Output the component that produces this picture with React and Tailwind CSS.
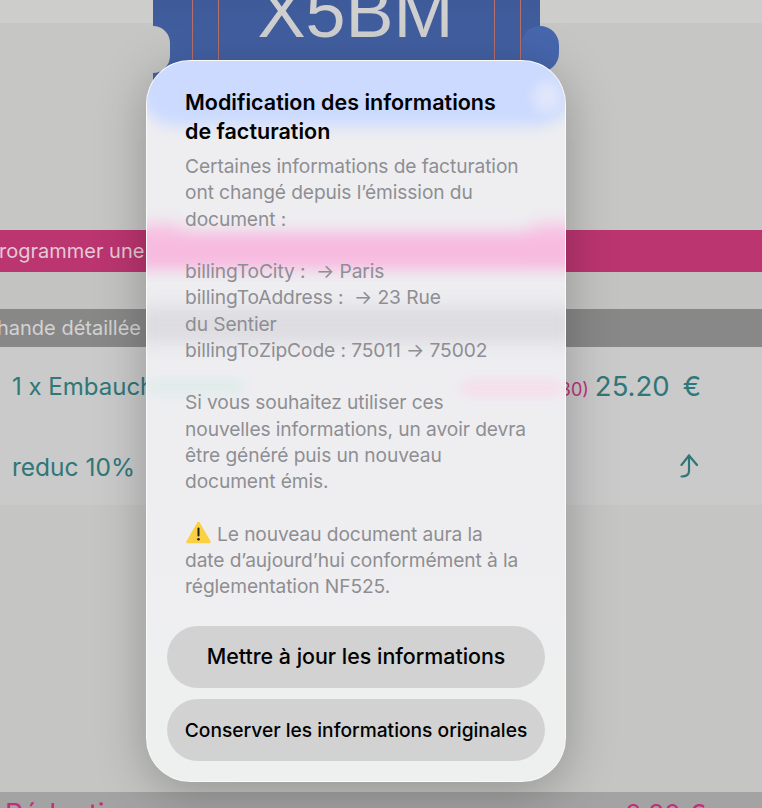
import React from 'react';

const sans = "font-['Inter','Liberation_Sans',sans-serif]";

const bodyBlocks = [
  ['Certaines informations de facturation', 'ont changé depuis l’émission du', 'document :'],
  ['billingToCity :  → Paris', 'billingToAddress :  → 23 Rue', 'du Sentier', 'billingToZipCode : 75011 → 75002'],
  ['Si vous souhaitez utiliser ces', 'nouvelles informations, un avoir devra', 'être généré puis un nouveau', 'document émis.'],
];

function WarningIcon() {
  return (
    <svg width="27" height="23" viewBox="0 0 27 23" className="inline-block align-[-3px] mr-[5px]">
      <path d="M13.5 2 L24.5 21 L2.5 21 Z" fill="#fbd043" stroke="#fbd043" strokeWidth="2.5" strokeLinejoin="round" />
      <rect x="12.5" y="6.5" width="2" height="9" rx="1" fill="#222" />
      <circle cx="13.5" cy="18.3" r="1.3" fill="#222" />
    </svg>
  );
}

function Ticket() {
  return (
    <div className="absolute left-[153px] top-0 w-[387px] h-[100px] bg-[linear-gradient(#3e5a98,#4766ad)]">
      <div className="absolute left-[39px] -top-[30px] w-[329px] h-[125px] border border-[#b96f6a] rounded-[24px]" />
      <div className="absolute left-[65px] -top-[20px] w-[277px] h-[120px] border-x border-[#b96f6a]" />
      <div className="absolute left-[9px] right-[-9px] -top-[28px] text-center text-[72px] leading-[80px] text-[#cfcfcf] font-['Liberation_Sans',sans-serif]">X5BM</div>
      <div className="absolute -left-[17px] top-[26px] w-[34px] h-[47px] rounded-full bg-[#c6c7c5]" />
      <div className="absolute -right-[19px] top-[26px] w-[38px] h-[46px] rounded-full bg-[#4766ad]" />
    </div>
  );
}

function Background() {
  return (
    <div className="absolute inset-0 flex flex-col overflow-hidden">
      <div className="relative h-[230px] shrink-0 bg-[#c6c7c5]">
        <div className="h-[23px] bg-[#cdcdcb]" />
        <Ticket />
      </div>
      <div className="h-[42px] shrink-0 bg-[#bb3570] overflow-hidden flex items-center text-[20px] text-[#e6c9d6] whitespace-nowrap">
        <span className="-ml-[1px]">rogrammer une</span>
      </div>
      <div className="h-[37px] shrink-0 bg-[#c3c4c2]" />
      <div className="h-[38px] shrink-0 bg-[#888888] flex items-center text-[20px] text-[#d3d3d3] whitespace-nowrap overflow-hidden">
        <span className="-ml-[3px]">hande détaillée</span>
      </div>
      <div className="h-[158px] shrink-0 bg-[#cacaca] text-[#2f7778]">
        <div className="flex items-center h-[80px] pl-[12px] pr-[61px]">
          <span className="text-[24px]">1 x Embauche</span>
          <span className="ml-auto text-[18px] text-[#c0307a] mr-[6px] mt-[4px]">30)</span>
          <span className="text-[27.5px]">25.20</span>
          <span className="text-[27.5px] ml-[13px]">€</span>
        </div>
        <div className="flex items-center h-[78px] pt-[2px] pl-[12px] pr-[62px]">
          <span className="text-[24.5px]">reduc 10%</span>
          <svg width="20" height="26" viewBox="0 0 20 26" className="ml-auto" fill="none" stroke="#2f7778" strokeWidth="2.2" strokeLinecap="round" strokeLinejoin="round">
            <path d="M1.5 11 L9 1.5 L17 11" />
            <path d="M9 1.5 V17 Q9 22.5 1.5 22.5" />
          </svg>
        </div>
      </div>
      <div className="h-[287px] shrink-0 bg-[#c5c6c4]" />
      <div className="flex-1 bg-[#a3a3a3] flex justify-between pl-[5px] pr-[56px] pt-[6px] text-[26px] leading-[32px] text-[#c0307a] whitespace-pre">
        <span className="text-[28px]">Réduction</span>
        <span>2.80<span className="ml-[8px]">€</span></span>
      </div>
    </div>
  );
}

export default function App() {
  return (
    <div className={`relative w-[762px] h-[808px] overflow-hidden ${sans}`}>
      <Background />
      <div className="absolute left-[146px] top-[60px] w-[420px] h-[722px] rounded-[44px] border border-white/70 bg-[#eeeef1] shadow-[0_10px_50px_rgba(0,0,0,0.26)] overflow-hidden">
        <div className="absolute inset-0 overflow-hidden">
          <div className="absolute -left-[10px] -right-[10px] -top-[30px] h-[95px] bg-[#cbdafe] rounded-[40px] blur-[7px]" />
          <div className="absolute right-[4px] top-[20px] w-[28px] h-[32px] rounded-full bg-[#e0e6fb] blur-[6px]" />
          <div className="absolute -left-[14px] w-[50px] top-[162px] h-[26px] rounded-full bg-[#f7cbe6] blur-[9px]" />
          <div className="absolute -right-[14px] w-[50px] top-[162px] h-[26px] rounded-full bg-[#f7cbe6] blur-[9px]" />
          <div className="absolute -left-[10px] -right-[10px] top-[171px] h-[38px] bg-[#f7bbe0] blur-[7px]" />
          <div className="absolute -left-[10px] -right-[10px] top-[246px] h-[36px] bg-[#dcdbe0] blur-[9px]" />
          <div className="absolute left-[0px] top-[320px] w-[95px] h-[12px] bg-[#dcebe8] blur-[6px]" />
          <div className="absolute left-[315px] top-[320px] w-[100px] h-[14px] bg-[#f6dce9] blur-[6px]" />
          <div className="absolute left-0 right-0 bottom-0 h-[280px] bg-[linear-gradient(transparent,#eef0ef)]" />
        </div>
        <div className="relative pl-[38px] pt-[27px] whitespace-pre">
          <div className="text-[21.5px] leading-[29px] font-semibold text-black">
            Modification des informations
            <br />
            de facturation
          </div>
          <div className="mt-[7px] text-[19.2px] leading-[26.25px] text-[#8e8e93] tracking-[-0.1px]">
            {bodyBlocks.map((lines, i) => (
              <div key={i} className="mb-[26.25px]">
                {lines.map((line) => (
                  <div key={line}>{line}</div>
                ))}
              </div>
            ))}
            <div className="h-[26.25px]"><WarningIcon />Le nouveau document aura la</div>
            <div>date d’aujourd’hui conformément à la</div>
            <div>réglementation NF525.</div>
          </div>
        </div>
        <div className="absolute left-[20px] right-[20px] top-[565px] flex flex-col gap-[11px]">
          <button className="h-[62px] pb-[1px] rounded-full bg-[#d2d2d2] text-[21.4px] font-medium text-black">Mettre à jour les informations</button>
          <button className="h-[62px] pt-[1px] rounded-full bg-[#d2d2d2] text-[19.2px] font-medium text-black whitespace-nowrap">Conserver les informations originales</button>
        </div>
      </div>
    </div>
  );
}
